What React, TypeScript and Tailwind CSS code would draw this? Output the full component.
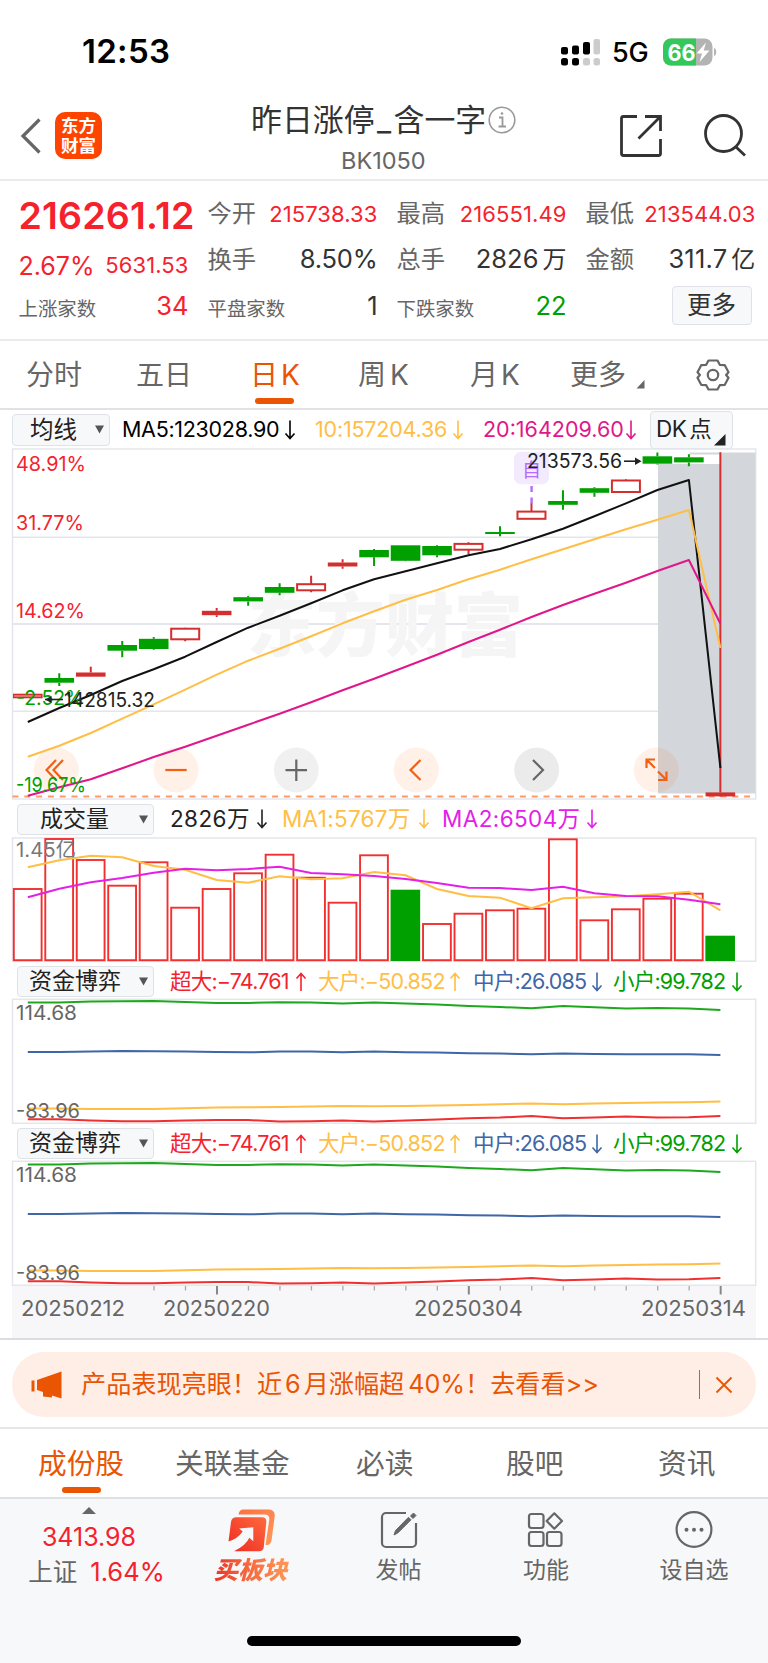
import type { ReactNode } from 'react';

const RED = '#f5222d';
const CANDLE_RED = '#d32f2f';
const GREEN = '#00a000';
const YELLOW = '#ffbe45';
const PINK = '#e0168a';
const MAGENTA = '#e320e8';
const BLUE = '#3f66a6';
const FONT = "Inter, 'Noto Sans CJK SC', sans-serif";

// center of the n-th trading day on every chart
const dayX = (i: number) => 27.8 + i * 31.48;
const toPoints = (ys: number[]) => ys.map((y, i) => `${dayX(i).toFixed(1)},${y}`).join(' ');

// [type, bodyTop, bodyBottom, wickTop, wickBottom]; r = red, h = hollow red, g = green
const candles: [string, number, number, number, number][] = [
    ['r', 693.7, 698.3, 693.7, 698.3],
    ['g', 678, 682.7, 673.3, 686],
    ['r', 672.5, 676.7, 666.7, 676.7],
    ['g', 645, 650.7, 641, 657.3],
    ['g', 638.8, 649, 637, 649.7],
    ['h', 628.7, 639.3, 627.7, 641.3],
    ['r', 610.8, 615.2, 608, 617],
    ['g', 597.2, 601.4, 596, 605.7],
    ['g', 587, 592.8, 583.3, 595.3],
    ['h', 584.2, 590.3, 575.7, 592.3],
    ['r', 562.5, 566.5, 559.3, 568.7],
    ['g', 550, 557.3, 549, 566],
    ['g', 545.3, 560.8, 545.3, 561.2],
    ['g', 546, 555.3, 545.3, 557.3],
    ['h', 543.9, 549.7, 542.3, 554],
    ['g', 532, 534, 526.3, 536.3],
    ['h', 511.6, 518.8, 503.3, 519],
    ['g', 501, 504.8, 490.3, 509.7],
    ['g', 488.2, 492.8, 487.3, 496.7],
    ['h', 480.5, 492, 479.3, 492],
    ['g', 456.3, 463.7, 452.5, 464.5],
    ['g', 457.3, 462.4, 454.3, 466.3],
    ['r', 792.4, 796.4, 452.3, 796],
];

const ma5 = [722, 708, 695, 681, 669.3, 656.7, 642, 627.7, 615.7, 603.3, 590.3, 579.3, 571.3, 563.3, 555.3, 549, 539.3, 528.7, 516.3, 503.3, 490, 480, 768];
const ma10 = [756.7, 745.7, 733, 718.7, 704.3, 689.7, 674.7, 660.7, 648.7, 636.3, 623.3, 611.3, 599.7, 590, 579.3, 569.7, 559.3, 549.3, 539.3, 529.3, 519.7, 510, 648];
const ma20 = [795.7, 787.3, 779.3, 768.3, 757, 746.7, 735.7, 724.7, 713.7, 702.3, 690.3, 678.7, 666.7, 654.7, 642, 629.7, 617, 605, 593.7, 582.7, 571, 560, 623.7];

const volumes = [889, 839, 860, 885.7, 862.3, 907.7, 889, 873.3, 854.7, 877.7, 902.7, 855.3, 889.7, 924, 913.7, 910.3, 908.7, 839.3, 920.3, 909.3, 898.7, 893.7, 935.7];
const volMa1 = [867.3, 860.3, 855.7, 857.3, 866, 869.7, 880, 882.7, 876.3, 879.3, 878.3, 872, 875.3, 889, 896, 897.7, 908.3, 898.3, 897.3, 896.3, 894.3, 891.7, 910.3];
const volMa2 = [897.3, 888.7, 882.3, 878, 872.7, 868.7, 870.3, 869, 866.7, 873, 874.3, 876, 879, 883, 887.7, 888, 890, 886.7, 893.3, 896, 896.3, 899.7, 904.3];

const fundSmall = [3.3, 3.3, 2.3, 2, 1.7, 2.7, 3.7, 3.7, 3, 3.3, 4.3, 3.3, 4.3, 5.3, 6.7, 7.7, 9, 6.7, 8, 9.3, 8.7, 9.3, 10.7];
const fundMid = [52.7, 52.7, 52.3, 51.7, 52, 52.3, 52.7, 53, 52.3, 52.3, 53, 52.3, 53, 53.3, 54, 54.3, 55, 54.3, 54.7, 55, 55, 55, 55.7];
const fundLarge = [109.3, 109.3, 109.7, 109.7, 109.7, 109, 108.3, 108, 107.7, 107.3, 106.7, 107, 106.7, 106.3, 105.7, 105, 104.3, 105, 104.3, 103.7, 103.3, 103, 102.3];
const fundHuge = [120, 120, 121.3, 122, 122, 121.3, 120.7, 120.7, 122.3, 122, 121.3, 122.3, 121.3, 120.3, 119, 118.3, 116.7, 119, 118.3, 117.3, 118.3, 118, 116.7];

function ChartText({ x, y, w, size = 20, fill, children }: { x: number; y: number; w: number; size?: number; fill: string; children: string }) {
    return (
        <text x={x} y={y} fontSize={size} fill={fill} textLength={w} lengthAdjust="spacingAndGlyphs" fontFamily={FONT}>
            {children}
        </text>
    );
}

function StatusBar() {
    return (
        <div className="flex h-20 items-center pt-[23px] text-black">
            <span className="ml-[82px] w-[479px] text-[33px] font-semibold leading-none tracking-[0.3px]">12:53</span>
            <svg width="40" height="28" viewBox="560 37 40 28" className="-ml-px">
                <rect x="561" y="46" width="7" height="7.5" rx="2" />
                <rect x="572" y="44.5" width="7" height="9" rx="2" />
                <rect x="583" y="41" width="7" height="12.5" rx="2" />
                <rect x="593.5" y="38" width="6.5" height="15.5" rx="2" fill="#ccc" />
                <rect x="561" y="57" width="7" height="7.5" rx="2.5" />
                <rect x="572" y="57" width="7" height="7.5" rx="2.5" />
                <rect x="583" y="57" width="7" height="7.5" rx="2.5" fill="#ccc" />
                <rect x="593.5" y="57" width="6.5" height="7.5" rx="2.5" fill="#ccc" />
            </svg>
            <span className="ml-3 w-[50px] pt-0.5 text-[27px] font-medium leading-none tracking-[-0.3px]">5G</span>
            <svg width="56" height="28" viewBox="661 37 56 28">
                <rect x="662" y="37.5" width="49.5" height="27" rx="8" fill="#b3b3b3" />
                <path d="M670 37.500h25v27h-25a8 8 0 0 1-8-8v-11a8 8 0 0 1 8-8z" fill="#34c759" />
                <path d="M713 47c3 .8 3 7.200 0 8z" fill="#b3b3b3" />
                <text x="666.500" y="59.500" fontSize="23" fontWeight="700" fill="#fff" textLength="28" lengthAdjust="spacingAndGlyphs" fontFamily={FONT}>66</text>
                <path d="M705 41.500l-9.500 11h5.500l-2.500 8.500 10-11.500h-5.800z" fill="#fff" />
            </svg>
        </div>
    );
}

function Header() {
    return (
        <div className="flex h-[101px] items-start border-b-2 border-[#ebebeb] text-[#333]">
            <svg width="22" height="38" viewBox="20 117 22 38" className="ml-5 mt-[37px]" fill="none" stroke="#666" strokeWidth="3.2">
                <path d="M39.500 119.500L23 136l16.500 16.500" />
            </svg>
            <div className="ml-[13px] mt-8 flex h-[47px] w-[47px] flex-col items-center justify-center rounded-[10px] bg-[#ff4400] text-[17.5px] font-bold leading-[19.500px] text-white">
                <span>东方</span>
                <span>财富</span>
            </div>
            <div className="ml-[149px] mt-[21px] w-[268px]">
                <div className="flex h-[38px] items-center gap-0.5">
                    <span className="whitespace-nowrap text-[30.900px] leading-none">昨日涨停<span className="inline-block w-[19px] text-center">_</span>含一字</span>
                    <svg width="28" height="28" viewBox="0 0 28 28" className="shrink-0" fill="none" stroke="#999" strokeWidth="1.600">
                        <circle cx="14" cy="14" r="12.800" />
                        <path d="M11 11.500h3.500V20M10.500 20.500h7.500" strokeWidth="1.800" />
                        <circle cx="14" cy="7.500" r="1.300" fill="#999" stroke="none" />
                    </svg>
                </div>
                <div className="mt-1 pl-[90px] text-[23.500px] leading-[36px] text-[#666]">BK1050</div>
            </div>
            <svg width="130" height="48" viewBox="618 112 130 48" className="ml-[99px] mt-8 shrink-0" fill="none" stroke="#333" strokeWidth="2.800">
                <path d="M637 116.500h-13.500a2 2 0 0 0-2 2v35a2 2 0 0 0 2 2h35a2 2 0 0 0 2-2v-14.500M645 116.500h15.500v14.500M660 117l-21.500 21.500" />
                <circle cx="723.500" cy="133.500" r="18" />
                <path d="M736 147l9 8.500" />
            </svg>
        </div>
    );
}

function Stat({ label, children }: { label: string; children?: ReactNode }) {
    return (
        <div className="flex h-[46px] items-center justify-between whitespace-nowrap">
            <span className="text-[24.300px] leading-none text-[#666]">{label}</span>
            {children}
        </div>
    );
}

function CountStat({ label, children }: { label: string; children: ReactNode }) {
    return (
        <div className="flex h-12 items-center justify-between whitespace-nowrap">
            <span className="pt-[7px] text-[19.400px] leading-none text-[#666]">{label}</span>
            {children}
        </div>
    );
}

function Quote() {
    return (
        <div className="grid h-[160px] grid-cols-[170px_170px_170px_170px] gap-x-[19px] border-b-2 border-[#ebebeb] pl-[18.500px] pt-[9px] text-[#333]">
            <div>
                <div className="flex h-[51px] items-center text-[37.500px] font-semibold leading-none tracking-[0.2px] text-[#f5222d]">216261.12</div>
                <div className="flex h-[41px] items-center justify-between pt-1.5 leading-none text-[#f5222d]">
                    <span className="pt-[3px] text-[25px]">2.67%</span>
                    <span className="text-[22px] tracking-[0.1px]">5631.53</span>
                </div>
                <CountStat label="上涨家数">
                    <span className="text-[25.500px] leading-none text-[#f5222d]">34</span>
                </CountStat>
            </div>
            <div>
                <Stat label="今开"><span className="pt-0.5 text-[22px] leading-none tracking-[0.1px] text-[#f5222d]">215738.33</span></Stat>
                <Stat label="换手"><span className="text-[25.500px] leading-none tracking-[-0.2px]">8.50%</span></Stat>
                <CountStat label="平盘家数"><span className="text-[25.500px] leading-none">1</span></CountStat>
            </div>
            <div>
                <Stat label="最高"><span className="pt-0.5 text-[22px] leading-none tracking-[0.1px] text-[#f5222d]">216551.49</span></Stat>
                <Stat label="总手"><span className="text-[25.500px] leading-none">2826<span className="ml-1 text-[24px]">万</span></span></Stat>
                <CountStat label="下跌家数"><span className="text-[25.500px] leading-none text-[#00a000]">22</span></CountStat>
            </div>
            <div>
                <Stat label="最低"><span className="pt-0.5 text-[22px] leading-none tracking-[0.1px] text-[#f5222d]">213544.03</span></Stat>
                <Stat label="金额"><span className="text-[25.500px] leading-none tracking-[0.2px]">311.7<span className="ml-1 text-[24px]">亿</span></span></Stat>
                <div className="flex h-12 items-center justify-end pr-1">
                    <button className="-mt-px flex h-[39px] w-20 items-center justify-center rounded border border-[#dfe2e8] bg-[#f7f8fa] text-[24.500px] leading-none">更多</button>
                </div>
            </div>
        </div>
    );
}

function PeriodTabs() {
    return (
        <div className="flex h-[69px] items-center border-b-2 border-[#e2e2e4] text-[28px] leading-none text-[#666]">
            <span className="ml-[26px] w-[110px]">分时</span>
            <span className="w-[114px]">五日</span>
            <span className="relative w-[108px] text-[#ea5504]">
                日<span className="ml-[3px]">K</span>
                <i className="absolute -bottom-[15px] left-[5px] h-[6px] w-[39px] rounded-full bg-[#ea5504]" />
            </span>
            <span className="w-[112px]">周<span className="ml-1">K</span></span>
            <span className="w-[100px]">月<span className="ml-[3px]">K</span></span>
            <span className="w-[66px]">更多</span>
            <svg width="9" height="9" viewBox="0 0 9 9" className="mt-[20px]"><path d="M8.500 0v8.500H.500z" fill="#666" /></svg>
            <svg width="34" height="34" viewBox="0 0 34 34" className="ml-[51px]" fill="none" stroke="#666" strokeWidth="2.200" strokeLinejoin="round">
                <path d="M12.500 2.500h9l2.300 4.300 5 .4 3.700 7-2.400 2.800 2.400 2.800-3.700 7-5 .4-2.300 4.300h-9l-2.300-4.300-5-.4-3.700-7L3.900 17l-2.400-2.800 3.700-7 5-.4z" />
                <circle cx="17" cy="17" r="5.200" />
            </svg>
        </div>
    );
}

function Arrow({ up = false }: { up?: boolean }) {
    return (
        <svg width="12" height="20" viewBox="0 0 12 20" className="shrink-0" fill="none" stroke="currentColor" strokeWidth="1.600">
            {up ? <path d="M6 19V1.500M1.500 6.500L6 1.500l4.500 5" /> : <path d="M6 .500v18M1.500 13.500L6 18.500l4.500-5" />}
        </svg>
    );
}

function Caret() {
    return <svg width="9" height="9" viewBox="0 0 9 9"><path d="M0 .500h9L4.500 8.500z" fill="#555" /></svg>;
}

function AverageLegend() {
    return (
        <div className="flex h-[38px] items-center whitespace-nowrap pt-0.5 text-[21.500px] leading-none">
            <button className="-mt-px ml-3 flex h-8 w-[98px] items-center justify-between rounded border border-[#dfe2e8] bg-[#f7f8fa] pl-[17px] pr-[5px] text-[23.500px] text-[#222]">均线<Caret /></button>
            <span className="ml-3 w-[162px] tracking-[-0.3px] text-black">MA5:123028.90</span>
            <Arrow />
            <span className="ml-[19px] flex w-[149px] items-center justify-between tracking-[-0.2px] text-[#ffbe45]">10:157204.36<Arrow /></span>
            <span className="ml-[19px] flex w-[154px] items-center justify-between text-[#e0168a]">20:164209.60<Arrow /></span>
            <button className="-mt-px ml-[13px] flex h-[38px] w-[83px] items-center rounded border border-[#dfe2e8] bg-[#f7f8fa] pl-[5px] text-[22.500px] tracking-[-0.5px] text-[#222]">
                DK<span className="ml-[3px]">点</span>
                <svg width="12" height="12" viewBox="0 0 12 12" className="mt-[20px] ml-[3px] shrink-0"><path d="M11.500 0v11.500H0z" fill="#222" /></svg>
            </button>
        </div>
    );
}

function KLineChart() {
    return (
        <svg width="768" height="352" viewBox="0 448 768 352" className="block" fill="none">
            <g stroke="#e3e6ec" strokeWidth="1.500">
                <rect x="12.500" y="449" width="743.200" height="350" />
                <path d="M12.500 537.300H755M12.500 711.200H755" />
                <path d="M12.500 624H755" strokeWidth="2" />
            </g>
            <text x="247" y="651" fontSize="69" fontWeight="900" fill="#f5f5f6" textLength="276" fontFamily={FONT}>东方财富</text>
            <path d="M658 464h62.500v-9.500H689.500v-2H755.500v341H658z" fill="#d3d7dc" />

            {/* pattern tag */}
            <rect x="514" y="451.700" width="35" height="32.600" rx="7" fill="#f3eafe" />
            <text x="522" y="476.500" fontSize="19" fill="#b36cff" fontFamily={FONT}>自</text>
            <path d="M531.600 486v6M531.600 497.500v6" stroke="#b36cff" strokeWidth="2.400" />

            {/* zoom and pan buttons */}
            <g fill="#ff5a00" fillOpacity="0.090">
                <circle cx="56.300" cy="770" r="22.500" />
                <circle cx="176" cy="770" r="22.500" />
                <circle cx="416.300" cy="770" r="22.500" />
                <circle cx="656.300" cy="770" r="22.500" />
            </g>
            <g fill="#000" fillOpacity="0.060">
                <circle cx="296.300" cy="770" r="22.500" />
                <circle cx="536.700" cy="770" r="22.500" fillOpacity="0.080" />
            </g>
            <g stroke="#f26015" strokeWidth="2.200">
                <path d="M56 760l-9.500 10 9.500 10M63 760l-9.500 10 9.500 10" />
                <path d="M165.300 770h21.400" />
                <path d="M420.500 760l-10 10 10 10" />
                <path d="M646.500 768v-8.500h8.500M646.500 759.500l8.500 8.500M666.500 771.500v8.500h-8.500M666.500 780l-8.500-8.500" />
            </g>
            <g stroke="#666" strokeWidth="2.200">
                <path d="M285.500 770.200h21.500M296.300 759.500v21.500" />
                <path d="M533 760l10 10-10 10" />
            </g>

            <path d="M12.500 796.400H755" stroke="#ff9a66" strokeWidth="2" strokeDasharray="6 5.800" />

            <ChartText x={16} y={470.700} w={70} fill={RED}>48.91%</ChartText>
            <ChartText x={16} y={530} w={68} fill={RED}>31.77%</ChartText>
            <ChartText x={16} y={617.700} w={69} fill={RED}>14.62%</ChartText>

            {candles.map(([type, top, bottom, high, low], i) => {
                const color = type === 'g' ? GREEN : CANDLE_RED;
                const x = dayX(i);
                return (
                    <g key={i} stroke={color} strokeWidth="2">
                        <path d={`M${x} ${high}V${top}M${x} ${bottom}V${low}`} />
                        {type === 'h'
                            ? <rect x={x - 14} y={top} width="28" height={bottom - top} />
                            : <rect x={x - 14.8} y={top} width="29.6" height={bottom - top} fill={color} stroke="none" />}
                    </g>
                );
            })}
            <path d="M14 696h27" stroke="#e58a8a" strokeWidth="1.500" />

            <g strokeWidth="2" strokeLinejoin="round">
                <polyline points={toPoints(ma5)} stroke="#111" />
                <polyline points={toPoints(ma10)} stroke={YELLOW} />
                <polyline points={toPoints(ma20)} stroke={PINK} />
            </g>

            <ChartText x={16} y={705.300} w={68} fill={GREEN}>-2.52%</ChartText>
            <ChartText x={16} y={791.700} w={70} fill={GREEN}>-19.67%</ChartText>
            <ChartText x={64} y={707} w={91} fill="#222">142815.32</ChartText>
            <path d="M45 699.500h18" stroke="#222" strokeWidth="1.600" />
            <path d="M45 699.500l6.500-3.500v7z" fill="#222" />
            <ChartText x={527} y={468} w={95} fill="#222">213573.56</ChartText>
            <path d="M624 461.200h16" stroke="#222" strokeWidth="1.600" />
            <path d="M641.500 461.200l-6.500-3.700v7.400z" fill="#222" />
        </svg>
    );
}

function IndicatorButton({ label, wide = false }: { label: string; wide?: boolean }) {
    return (
        <button className={`ml-[17px] flex h-[31px] w-[137px] shrink-0 items-center justify-between rounded border border-[#dfe2e8] bg-[#f7f8fa] pr-[5px] text-[23px] text-[#222] ${wide ? 'pl-[11px]' : 'pl-[22px]'}`}>
            {label}
            <Caret />
        </button>
    );
}

function VolumePanel() {
    return (
        <>
            <div className="flex h-[37px] items-center whitespace-nowrap pt-px text-[22.500px] leading-none">
                <IndicatorButton label="成交量" />
                <span className="ml-[16px] flex w-[98px] items-center justify-between tracking-[0.4px] text-[#222]">2826万<Arrow /></span>
                <span className="ml-[14px] flex w-[148px] items-center justify-between tracking-[0.3px] text-[#ffbe45]">MA1:5767万<Arrow /></span>
                <span className="ml-3 flex w-[156px] items-center justify-between tracking-[0.400px] text-[#e320e8]">MA2:6504万<Arrow /></span>
            </div>
            <svg width="768" height="125" viewBox="0 837 768 125" className="block" fill="none">
                <rect x="12.500" y="838" width="743.200" height="123.200" stroke="#e3e6ec" strokeWidth="1.500" />
                {volumes.map((top, i) => i === 12 || i === 22
                    ? <rect key={i} x={dayX(i) - 15} y={top} width="29.6" height={961 - top} fill={GREEN} />
                    : <rect key={i} x={dayX(i) - 14} y={top} width="27.8" height={960.200 - top} stroke="#f23030" strokeWidth="1.900" />)}
                <ChartText x={16} y={857} w={60} fill="#777">1.45亿</ChartText>
                <polyline points={toPoints(volMa1)} stroke={YELLOW} strokeWidth="2" />
                <polyline points={toPoints(volMa2)} stroke={MAGENTA} strokeWidth="2" />
            </svg>
        </>
    );
}

function FundPanel() {
    return (
        <>
            <div className="flex h-9 items-center whitespace-nowrap pt-[3px] text-[21.500px] leading-none">
                <IndicatorButton label="资金博弈" wide />
                <span className="ml-[16px] flex w-[137px] items-center justify-between tracking-[-0.8px] text-[#f5222d]">超大:−74.761<Arrow up /></span>
                <span className="ml-[11px] flex w-[143px] items-center justify-between tracking-[-0.8px] text-[#ffbe45]">大户:−50.852<Arrow up /></span>
                <span className="ml-3 flex w-[130px] items-center justify-between tracking-[-0.8px] text-[#3f66a6]">中户:26.085<Arrow /></span>
                <span className="ml-[10px] flex w-[130px] items-center justify-between tracking-[-0.8px] text-[#00a000]">小户:99.782<Arrow /></span>
            </div>
            <svg width="768" height="126" viewBox="0 -1.300 768 126" className="block" fill="none">
                <rect x="12.500" y="0" width="743.200" height="124" stroke="#e3e6ec" strokeWidth="1.500" />
                <g strokeWidth="2">
                    <polyline points={toPoints(fundSmall)} stroke="#1ea81e" />
                    <polyline points={toPoints(fundMid)} stroke={BLUE} />
                    <polyline points={toPoints(fundLarge)} stroke={YELLOW} />
                    <polyline points={toPoints(fundHuge)} stroke="#f03030" />
                </g>
                <ChartText x={16} y={20.500} w={61} fill="#666">114.68</ChartText>
                <ChartText x={16} y={119.200} w={64} fill="#666">-83.96</ChartText>
            </svg>
        </>
    );
}

function TimeAxis() {
    const ticks = Array.from({ length: 19 }, (_, i) => i + 4);
    return (
        <div className="border-b-2 border-[#dcdce2]">
            <svg width="768" height="52" viewBox="0 1286 768 52" className="block">
                <rect x="12" y="1285" width="744" height="54" fill="#f7f7fa" />
                {ticks.map((i) => {
                    const major = i % 8 === 6;
                    return <path key={i} d={`M${dayX(i) + 0.300} 1285v${major ? 9.500 : 5.500}`} stroke={major ? '#888' : '#aaa'} strokeWidth={major ? 2 : 1.300} />;
                })}
                <ChartText x={21} y={1316} w={104} size={21.500} fill="#666">20250212</ChartText>
                <ChartText x={163} y={1316} w={107} size={21.500} fill="#666">20250220</ChartText>
                <ChartText x={414} y={1316} w={109} size={21.500} fill="#666">20250304</ChartText>
                <ChartText x={641} y={1316} w={105} size={21.500} fill="#666">20250314</ChartText>
            </svg>
        </div>
    );
}

function Banner() {
    return (
        <div className="h-[89px] border-b-2 border-[#e6e6e8] px-3 pt-3">
            <div className="flex h-[65px] items-center rounded-[32px] bg-[#ffeee6] text-[#ea5504]">
                <svg width="32" height="28" viewBox="31 1370 32 28" className="ml-[19px]" fill="#ea5504">
                    <path d="M31.500 1379.500h3v11h-3zM37 1379l24.500-8.500v27l-9.500-3v2l-9-1v-4.500l-6-2z" />
                </svg>
                <span className="ml-[18px] flex-1 whitespace-nowrap pt-px text-[25.200px] leading-none tracking-[-0.05px]">产品表现亮眼！近<span className="mx-[3px]">6</span>月涨幅超<span className="ml-1">40%</span>！去看看&gt;&gt;</span>
                <i className="h-[29px] w-px bg-[#ea5504]" />
                <svg width="18" height="18" viewBox="0 0 18 18" className="ml-[15px] mr-[23px]" stroke="#ea5504" strokeWidth="1.900"><path d="M1.500 1.500l15 15M16.500 1.500l-15 15" /></svg>
            </div>
        </div>
    );
}

function InfoTabs() {
    return (
        <div className="flex h-[70px] items-center border-b-2 border-[#e0e1e5] pt-[3px] text-[28.700px] leading-none text-[#666]">
            <span className="relative ml-[38px] w-[137px] text-[#ea5504]">
                成份股
                <i className="absolute -bottom-[14px] left-6 h-[6px] w-[39px] rounded-full bg-[#ea5504]" />
            </span>
            <span className="w-[181px]">关联基金</span>
            <span className="w-[150px]">必读</span>
            <span className="w-[152px]">股吧</span>
            <span>资讯</span>
        </div>
    );
}

function BottomBar() {
    return (
        <div className="h-[164px] bg-[#f7f8fa]">
            <div className="flex h-[90px] text-[23px] leading-none text-[#666]">
                <div className="flex w-[178px] flex-col items-center whitespace-nowrap pt-2">
                    <svg width="14" height="7" viewBox="0 0 14 7"><path d="M7 0l7 7H0z" fill="#666" /></svg>
                    <span className="mt-[11px] text-[25px] leading-[24px] text-[#f5222d]">3413.98</span>
                    <span className="mt-[10px] flex items-center gap-[13px] pl-[15px] text-[24.500px] leading-[26px]">上证<span className="text-[25.500px] text-[#f5222d]">1.64%</span></span>
                </div>
                <div className="flex w-[147px] flex-col items-center pt-[10px]">
                    <svg width="48" height="43" viewBox="228 1508.500 48 43">
                        <defs>
                            <linearGradient id="front" x1="0" y1="1" x2="1" y2="0">
                                <stop offset="0" stopColor="#ee2a25" />
                                <stop offset="1" stopColor="#ff6a3c" />
                            </linearGradient>
                            <linearGradient id="back" x1="0" y1="0" x2="1" y2="1">
                                <stop offset="0" stopColor="#ff7040" />
                                <stop offset="1" stopColor="#ff9a5c" />
                            </linearGradient>
                        </defs>
                        <path d="M238.500 1514q.800-5 5-5H268q7.500 0 6.700 7L271.500 1540q-.800 4.500-5 4.500h-1L269.300 1519q.400-5-4.800-5z" fill="url(#back)" />
                        <path d="M236.500 1516.700h25.500q4.700 0 4.300 4.700l-2.500 25q-.500 4.300-5 4.300H234Q246 1545 249.300 1537.300L253.300 1540.700V1526.700L239.300 1528L242.700 1531Q238 1538 228.500 1541L231 1521.500q.500-4.800 5.500-4.800z" fill="url(#front)" />
                    </svg>
                    <span className="-ml-0.5 mt-[6px] bg-gradient-to-r from-[#ea2a25] to-[#ff9a58] bg-clip-text px-1 text-[24.500px] font-black italic leading-[25px] text-transparent">买板块</span>
                </div>
                <div className="flex w-[147px] flex-col items-center pt-3">
                    <svg width="38" height="38" viewBox="380 1511 38 38" fill="none" stroke="#666" strokeWidth="2.200">
                        <path d="M406 1513h-20a4 4 0 0 0-4 4v26a4 4 0 0 0 4 4h26a4 4 0 0 0 4-4v-20" />
                        <path d="M394 1535l1.500-4.500 13-13.200 2.500 2.500-13 13zM410.500 1516l3-3 2.500 2.500-3 3z" fill="#666" strokeWidth="1" />
                    </svg>
                    <span className="mt-2.5">发帖</span>
                </div>
                <div className="flex w-[148px] flex-col items-center pt-3">
                    <svg width="38" height="38" viewBox="528 1511 38 38" fill="none" stroke="#666" strokeWidth="2.200" strokeLinejoin="round">
                        <rect x="530" y="1514" width="14.500" height="14" rx="2.500" />
                        <rect x="530" y="1532" width="14.500" height="14" rx="2.500" />
                        <rect x="548" y="1532" width="14.500" height="14" rx="2.500" />
                        <path d="M555.300 1513.300l7.700 7.700-7.700 7.700-7.700-7.700z" />
                    </svg>
                    <span className="mt-2.5">功能</span>
                </div>
                <div className="flex w-[148px] flex-col items-center pt-3">
                    <svg width="38" height="38" viewBox="0 0 38 38" fill="#666">
                        <circle cx="19" cy="18.500" r="17.400" fill="none" stroke="#666" strokeWidth="2.200" />
                        <circle cx="11.500" cy="18.700" r="2" />
                        <circle cx="19" cy="18.700" r="2" />
                        <circle cx="26.500" cy="18.700" r="2" />
                    </svg>
                    <span className="mt-2.5">设自选</span>
                </div>
            </div>
            <div className="mx-auto mt-[47px] h-[10px] w-[274px] rounded-full bg-black" />
        </div>
    );
}

export default function App() {
    return (
        <div className="h-[1663px] w-[768px] overflow-hidden bg-white font-[Inter,'Noto_Sans_CJK_SC',sans-serif]">
            <StatusBar />
            <Header />
            <Quote />
            <PeriodTabs />
            <AverageLegend />
            <KLineChart />
            <VolumePanel />
            <FundPanel />
            <FundPanel />
            <TimeAxis />
            <Banner />
            <InfoTabs />
            <BottomBar />
        </div>
    );
}
